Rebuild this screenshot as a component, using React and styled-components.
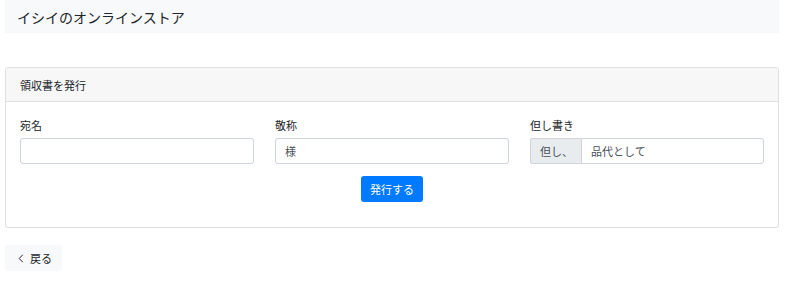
import React from "react";
import styled, { createGlobalStyle } from "styled-components";

const Global = createGlobalStyle`
  html, body { margin: 0; padding: 0; background: #fff; }
  body {
    font-family: "Noto Sans CJK JP", "Noto Sans", sans-serif;
    color: #212529;
    font-size: 11px;
  }
  * { box-sizing: border-box; }
`;

const Page = styled.div`
  padding: 0 21px 0 5px;
  display: flex;
  flex-direction: column;
`;

const Navbar = styled.header`
  height: 33px;
  background: #f8f9fa;
  display: flex;
  align-items: center;
  padding: 0 12px;
  font-size: 14px;
  color: #212529;
`;

const Card = styled.section`
  margin-top: 34px;
  border: 1px solid #dfdfdf;
  border-radius: 3px;
  overflow: hidden;
`;

const CardHeader = styled.div`
  height: 34px;
  background: #f7f7f7;
  border-bottom: 1px solid #dfdfdf;
  display: flex;
  align-items: center;
  padding: 0 14px;
  font-size: 11px;
`;

const CardBody = styled.div`
  padding: 15px 14px 25px;
  display: flex;
  flex-direction: column;
  align-items: center;
`;

const Row = styled.div`
  align-self: stretch;
  display: grid;
  grid-template-columns: repeat(3, 1fr);
  column-gap: 21px;
`;

const Field = styled.div`
  display: flex;
  flex-direction: column;
`;

const Label = styled.label`
  font-size: 11px;
  line-height: 16px;
  margin-bottom: 5px;
`;

const Input = styled.input`
  height: 26px;
  width: 100%;
  min-width: 0;
  border: 1px solid #ced4da;
  border-radius: 3px;
  padding: 0 9px;
  font: inherit;
  font-size: 11px;
  color: #495057;
  background: #fff;
  outline: none;
`;

const InputGroup = styled.div`
  display: flex;
  height: 26px;
`;

const Prepend = styled.span`
  width: 51px;
  flex: none;
  display: flex;
  align-items: center;
  padding: 0 0 0 9px;
  white-space: nowrap;
  background: #e9ecef;
  border: 1px solid #ced4da;
  border-right: none;
  border-radius: 3px 0 0 3px;
  color: #495057;
  font-size: 11px;
`;

const GroupInput = styled(Input)`
  flex: 1;
  border-radius: 0 3px 3px 0;
`;

const PrimaryButton = styled.button`
  margin-top: 12px;
  height: 26px;
  width: 62px;
  border: none;
  border-radius: 3px;
  background: #007bff;
  color: #fff;
  font: inherit;
  font-size: 11px;
  padding: 0;
  cursor: pointer;
`;

const BackButton = styled.button`
  margin-top: 17px;
  align-self: flex-start;
  height: 26px;
  width: 57px;
  border: none;
  border-radius: 3px;
  background: #f8f9fa;
  color: #212529;
  font: inherit;
  font-size: 11px;
  display: flex;
  align-items: center;
  gap: 6px;
  padding: 0 0 0 13px;
`;

const Chevron = () => (
  <svg width="6" height="9" viewBox="0 0 6 9" fill="none">
    <path d="M4.8 0.8 L1.2 4.5 L4.8 8.2" stroke="#212529" strokeWidth="1" />
  </svg>
);

export default function App() {
  return (
    <>
      <Global />
      <Page>
        <Navbar>イシイのオンラインストア</Navbar>
        <Card>
          <CardHeader>領収書を発行</CardHeader>
          <CardBody>
            <Row>
              <Field>
                <Label>宛名</Label>
                <Input defaultValue="" />
              </Field>
              <Field>
                <Label>敬称</Label>
                <Input defaultValue="様" />
              </Field>
              <Field>
                <Label>但し書き</Label>
                <InputGroup>
                  <Prepend>但し、</Prepend>
                  <GroupInput defaultValue="品代として" />
                </InputGroup>
              </Field>
            </Row>
            <PrimaryButton>発行する</PrimaryButton>
          </CardBody>
        </Card>
        <BackButton>
          <Chevron />
          戻る
        </BackButton>
      </Page>
    </>
  );
}
